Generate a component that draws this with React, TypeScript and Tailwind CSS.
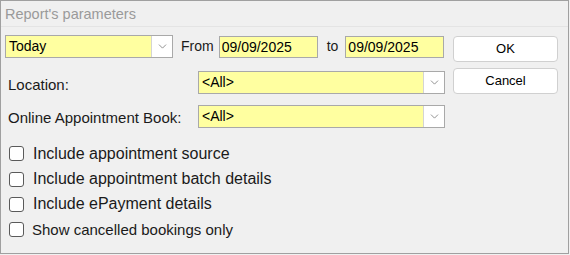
import { ChevronDown } from "lucide-react";

const font = { fontFamily: '"Liberation Sans", Arial, sans-serif' };

function Combo({ value, className }: { value: string; className: string }) {
  return (
    <div className={`flex h-[23px] border border-[#a9a9a9] bg-[#ffffa0] ${className}`}>
      <div className="flex-1 pl-[3px] text-[14px] leading-[21px] text-black">{value}</div>
      <div className="flex w-[21px] items-center justify-center border-l border-[#d4d4d4] bg-white">
        <ChevronDown className="h-[13px] w-[13px] text-[#7a7a7a]" strokeWidth={1.5} />
      </div>
    </div>
  );
}

function DateBox({ value }: { value: string }) {
  return (
    <div className="h-[22px] w-[99px] border border-[#a9a9a9] bg-[#ffffa0] pl-[2px] text-[14px] leading-[20px] text-black">
      {value}
    </div>
  );
}

function Btn({ label }: { label: string }) {
  return (
    <button className="h-[26px] w-[105px] rounded-[4px] border border-[#d0d0d0] bg-white text-[13px] text-black">
      {label}
    </button>
  );
}

function Check({ label, small }: { label: string; small?: boolean }) {
  return (
    <div className="flex h-[25.4px] items-center">
      <div className="h-[15px] w-[15px] rounded-[3px] border border-[#5a5a5a] bg-white" />
      <span className={small ? "ml-[8px] text-[15px] text-[#1a1a1a]" : "ml-[9px] text-[16px] text-[#1a1a1a]"}>{label}</span>
    </div>
  );
}

export default function App() {
  return (
    <div style={font} className="h-[255px] w-[570px] bg-[#f0f0f0]">
      <div className="h-[254px] w-[569px] border border-[#a0a0a0] bg-[#f0f0f0]">
        <div className="h-[26px] border-b border-[#e4e4e4] pl-[4px] pt-[3px] text-[14.5px] text-[#9a9a9a]">
          Report's parameters
        </div>
        <div className="flex pl-[4px] pt-[8px]">
          <div className="flex flex-col">
            <div className="flex items-center">
              <Combo value="Today" className="w-[168px]" />
              <span className="ml-[8px] text-[14px] text-[#1a1a1a]">From</span>
              <div className="ml-[5px]">
                <DateBox value="09/09/2025" />
              </div>
              <span className="ml-[9px] text-[14px] text-[#1a1a1a]">to</span>
              <div className="ml-[7px]">
                <DateBox value="09/09/2025" />
              </div>
            </div>
            <div className="mt-[13px] flex items-start">
              <span className="mt-[4px] w-[193px] pl-[3px] text-[15px] leading-[20px] text-[#1a1a1a]">Location:</span>
              <Combo value="<All>" className="w-[247px]" />
            </div>
            <div className="mt-[10px] flex items-start">
              <span className="mt-[3px] w-[193px] pl-[3px] text-[15px] leading-[20px] text-[#1a1a1a]">Online Appointment Book:</span>
              <Combo value="<All>" className="w-[247px]" />
            </div>
          </div>
          <div className="ml-[8px] flex flex-col gap-[6px] pt-[1px]">
            <Btn label="OK" />
            <Btn label="Cancel" />
          </div>
        </div>
        <div className="flex flex-col pl-[8px] pt-[13px]">
          <Check label="Include appointment source" />
          <Check label="Include appointment batch details" />
          <Check label="Include ePayment details" />
          <Check label="Show cancelled bookings only" small />
        </div>
      </div>
    </div>
  );
}
